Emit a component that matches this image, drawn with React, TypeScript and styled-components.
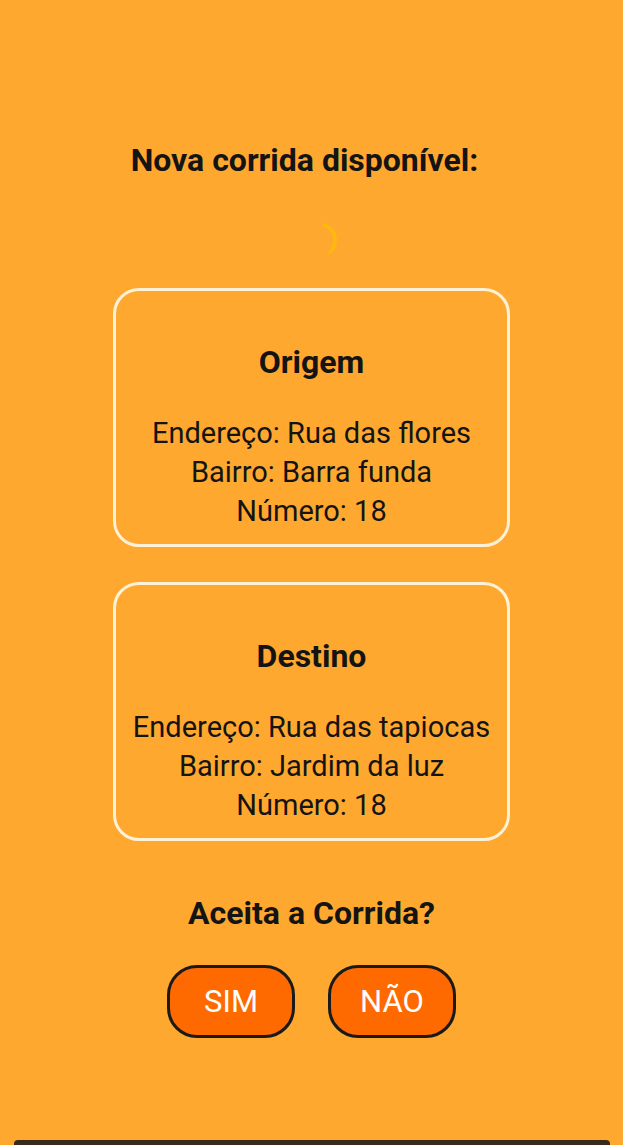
import React from "react";
import styled, { createGlobalStyle } from "styled-components";

const Global = createGlobalStyle`
  html, body { margin: 0; padding: 0; background: #ffa82f; }
  body { font-family: Roboto, "Noto Sans", Arial, sans-serif; }
  * { box-sizing: border-box; }
`;

const Screen = styled.div`
  min-height: 100vh;
  display: flex;
  flex-direction: column;
  align-items: center;
  background: #ffa82f;
  color: #141414;
`;

const Title = styled.h1`
  margin: 143px 14px 0 0;
  font-size: 32px;
  line-height: 34px;
  font-weight: 700;
`;

const Spinner = styled.div`
  margin: 41px 0 0 52px;
  width: 40px;
  height: 40px;
  display: flex;
  align-items: center;
  justify-content: center;
`;

const Card = styled.section<{ $top: number }>`
  width: 397px;
  height: 259px;
  margin-top: ${(p) => p.$top}px;
  border: 3px solid #fff1d6;
  border-radius: 26px;
  padding: 54px 0 0;
  display: flex;
  flex-direction: column;
  align-items: center;
  text-align: center;
`;

const CardTitle = styled.h2`
  margin: 0;
  font-size: 32px;
  line-height: 34px;
  font-weight: 700;
`;

const Lines = styled.div`
  margin-top: 35px;
  display: flex;
  flex-direction: column;
  align-items: center;
`;

const Line = styled.p`
  margin: 0;
  font-size: 29px;
  line-height: 39px;
  font-weight: 400;
  white-space: nowrap;
`;

const Question = styled.h3`
  margin: 55px 0 0;
  font-size: 32px;
  line-height: 34px;
  font-weight: 700;
`;

const Buttons = styled.div`
  margin-top: 35px;
  display: flex;
  gap: 33px;
`;

const Btn = styled.button`
  width: 128px;
  height: 73px;
  border: 3px solid #1a1a1a;
  border-radius: 30px;
  background: #ff6a00;
  color: #fff;
  font-family: Roboto, Arial, sans-serif;
  font-size: 31px;
  font-weight: 400;
  cursor: pointer;
  padding: 0;
`;

const NavBar = styled.div`
  margin-top: auto;
  width: 596px;
  height: 5px;
  background: #3a2a1c;
  border-radius: 4px 4px 0 0;
`;

const places = [
  {
    title: "Origem",
    rows: ["Endereço: Rua das flores", "Bairro: Barra funda", "Número: 18"],
  },
  {
    title: "Destino",
    rows: ["Endereço: Rua das tapiocas", "Bairro: Jardim da luz", "Número: 18"],
  },
];

export default function App() {
  return (
    <Screen>
      <Global />
      <Title>Nova corrida disponível:</Title>
      <Spinner>
        <svg width="40" height="40" viewBox="0 0 40 40">
          <path
            d="M 6 7 A 16 16 0 0 1 12 34"
            fill="none"
            stroke="#ffbf00"
            strokeWidth="3.5"
            strokeLinecap="round"
            opacity="0.75"
          />
        </svg>
      </Spinner>
      {places.map((p, i) => (
        <Card key={p.title} $top={i === 0 ? 30 : 35}>
          <CardTitle>{p.title}</CardTitle>
          <Lines>
            {p.rows.map((r) => (
              <Line key={r}>{r}</Line>
            ))}
          </Lines>
        </Card>
      ))}
      <Question>Aceita a Corrida?</Question>
      <Buttons>
        <Btn>SIM</Btn>
        <Btn>NÃO</Btn>
      </Buttons>
      <NavBar />
    </Screen>
  );
}
